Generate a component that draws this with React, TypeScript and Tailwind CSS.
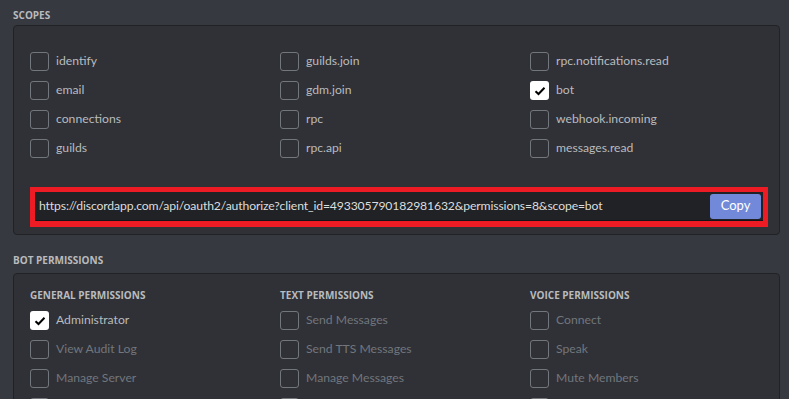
import React from 'react';

const scopes = [
  ['identify', 'guilds.join', 'rpc.notifications.read'],
  ['email', 'gdm.join', 'bot'],
  ['connections', 'rpc', 'webhook.incoming'],
  ['guilds', 'rpc.api', 'messages.read'],
];

// last row is only peeking in at the bottom edge
const perms = [
  {
    title: 'General Permissions',
    items: ['Administrator', 'View Audit Log', 'Manage Server', ''],
  },
  {
    title: 'Text Permissions',
    items: ['Send Messages', 'Send TTS Messages', 'Manage Messages', ''],
  },
  {
    title: 'Voice Permissions',
    items: ['Connect', 'Speak', 'Mute Members', ''],
  },
];

const checked = ['bot', 'Administrator'];

const Check = ({ on }: { on: boolean }) => (
  <div
    className={
      on
        ? 'w-[19px] h-[19px] shrink-0 rounded-[3px] bg-white flex items-center justify-center'
        : 'w-[19px] h-[19px] shrink-0 rounded-[3px] border border-[#72767d]'
    }
  >
    {on && (
      <svg width="12" height="10" viewBox="0 0 12 10">
        <polyline points="1.5,5.2 4.5,8 10.5,1.8" fill="none" stroke="#000" strokeWidth="2" />
      </svg>
    )}
  </div>
);

const Row = ({ label, dim }: { label: string; dim?: boolean }) => {
  const on = checked.includes(label);
  return (
    <div className="flex items-center h-[19px] gap-[7px]">
      <Check on={on} />
      <span className={dim && !on ? 'text-[#72767d]' : 'text-[#b9bbbe]'}>{label}</span>
    </div>
  );
};

export default function App() {
  return (
    <div
      className="w-[789px] h-[399px] overflow-hidden bg-[#36393f] px-[13px] pt-[9px] text-[12.2px]"
      style={{ fontFamily: 'Lato, "Open Sans", sans-serif' }}
    >
      {/* Scopes */}
      <h2
        className="text-[10px] font-bold uppercase leading-[12px] text-[#b9bbbe]"
        style={{ fontFamily: '"Open Sans", sans-serif' }}
      >
        Scopes
      </h2>
      <div className="mt-[4px] w-[767px] rounded-[4px] border border-[#202225] bg-[#2f3136] pl-[16px] pr-[11px] pt-[26px] pb-[7px]">
        <div className="grid grid-cols-[250px_250px_250px] gap-y-[10px]">
          {scopes.flat().map((s) => (
            <Row key={s} label={s} />
          ))}
        </div>
        <div className="mt-[29px] border-[5px] border-b-[6px] border-[#ed1c24]">
          <div className="flex items-center h-[29px] bg-[#202225] border-b border-[#141518] pl-[4px] pr-[2px]">
            <span className="flex-1 text-[#dcddde] tracking-[-0.13px] truncate">
              https://discordapp.com/api/oauth2/authorize?client_id=493305790182981632&amp;permissions=8&amp;scope=bot
            </span>
            <button className="h-[25px] w-[51px] rounded-[3px] bg-[#7289da] text-[13px] text-white">Copy</button>
          </div>
        </div>
      </div>

      {/* Bot permissions */}
      <h2
        className="mt-[19px] text-[10px] font-bold uppercase leading-[12px] text-[#b9bbbe]"
        style={{ fontFamily: '"Open Sans", sans-serif' }}
      >
        Bot Permissions
      </h2>
      <div className="mt-[7px] w-[767px] rounded-[4px] border border-[#202225] bg-[#2f3136] pl-[16px] pt-[15px] pb-[20px]">
        <div className="grid grid-cols-[250px_250px_250px]">
          {perms.map((p) => (
            <div key={p.title}>
              <h3
                className="text-[10px] font-bold uppercase leading-[12px] text-[#b9bbbe]"
                style={{ fontFamily: '"Open Sans", sans-serif' }}
              >
                {p.title}
              </h3>
              <div className="mt-[10px] flex flex-col gap-[10px]">
                {p.items.map((i, n) => (
                  <Row key={n} label={i} dim />
                ))}
              </div>
            </div>
          ))}
        </div>
      </div>
    </div>
  );
}
